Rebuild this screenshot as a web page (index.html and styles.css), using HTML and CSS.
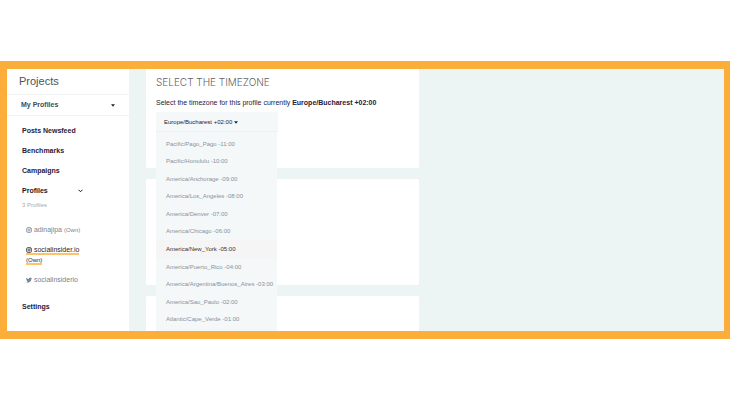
FILE: index.html
```
<!DOCTYPE html>
<html lang="en">
<head>
  <meta charset="UTF-8">
  <meta name="viewport" content="width=device-width, initial-scale=1">
  <title>Projects - Select the timezone</title>
  <link rel="stylesheet" href="styles.css">
</head>
<body>
  <!-- shared icons -->
  <svg class="sprite" aria-hidden="true">
    <symbol id="instagram" viewBox="0 0 16 16">
      <rect x="1.5" y="1.5" width="13" height="13" rx="4" fill="none" stroke="currentColor" stroke-width="2"/>
      <circle cx="8" cy="8" r="3" fill="none" stroke="currentColor" stroke-width="2"/>
      <circle cx="11.8" cy="4.2" r="1" fill="currentColor"/>
    </symbol>
    <symbol id="twitter" viewBox="0 0 24 24">
      <path fill="currentColor" d="M24 4.6a10 10 0 0 1-2.8.8 5 5 0 0 0 2.1-2.7 10 10 0 0 1-3.1 1.2 4.9 4.9 0 0 0-8.4 4.5A14 14 0 0 1 1.7 3.2a4.9 4.9 0 0 0 1.5 6.5 5 5 0 0 1-2.2-.6 4.9 4.9 0 0 0 3.9 4.9 5 5 0 0 1-2.2.1 4.9 4.9 0 0 0 4.6 3.4A10 10 0 0 1 0 19.5 14 14 0 0 0 21.5 7.1 10 10 0 0 0 24 4.6z"/>
    </symbol>
    <symbol id="caret" viewBox="0 0 8 5">
      <path fill="currentColor" d="M0 0h8L4 5z"/>
    </symbol>
    <symbol id="chevron" viewBox="0 0 10 7">
      <path fill="none" stroke="currentColor" stroke-width="2" d="M1 1l4 4 4-4"/>
    </symbol>
  </svg>

  <div class="frame">
    <aside class="sidebar">
      <h1 class="sidebar-title">Projects</h1>
      <div class="project-picker">
        <select class="project-select" aria-label="Project">
          <option>My Profiles</option>
        </select>
        <svg class="caret"><use href="#caret"/></svg>
      </div>
      <nav class="nav">
        <a class="nav-link" href="#">Posts Newsfeed</a>
        <a class="nav-link" href="#">Benchmarks</a>
        <a class="nav-link" href="#">Campaigns</a>
        <a class="nav-link nav-link-open" href="#">Profiles <svg class="chevron"><use href="#chevron"/></svg></a>
        <p class="nav-count">3 Profiles</p>
        <ul class="profiles">
          <li><a class="profile" href="#"><svg class="icon"><use href="#instagram"/></svg> adinajipa <small>(Own)</small></a></li>
          <li><a class="profile profile-active" href="#"><svg class="icon"><use href="#instagram"/></svg> socialinsider.io <small>(Own)</small></a></li>
          <li><a class="profile" href="#"><svg class="icon"><use href="#twitter"/></svg> socialinsiderio</a></li>
        </ul>
        <a class="nav-link" href="#">Settings</a>
      </nav>
    </aside>

    <main class="content">
      <section class="card">
        <h2 class="card-title">SELECT THE TIMEZONE</h2>
        <p class="card-text">Select the timezone for this profile currently <b>Europe/Bucharest +02:00</b></p>
        <div class="dropdown">
          <button class="dropdown-toggle" type="button" aria-haspopup="listbox" aria-expanded="true">Europe/Bucharest +02:00 <svg class="caret"><use href="#caret"/></svg></button>
          <div class="dropdown-menu" role="listbox" aria-label="Timezone">
            <button class="dropdown-item" type="button" role="option">Pacific/Pago_Pago -11:00</button>
            <button class="dropdown-item" type="button" role="option">Pacific/Honolulu -10:00</button>
            <button class="dropdown-item" type="button" role="option">America/Anchorage -09:00</button>
            <button class="dropdown-item" type="button" role="option">America/Los_Angeles -08:00</button>
            <button class="dropdown-item" type="button" role="option">America/Denver -07:00</button>
            <button class="dropdown-item" type="button" role="option">America/Chicago -06:00</button>
            <button class="dropdown-item dropdown-item-hover" type="button" role="option">America/New_York -05:00</button>
            <button class="dropdown-item" type="button" role="option">America/Puerto_Rico -04:00</button>
            <button class="dropdown-item" type="button" role="option">America/Argentina/Buenos_Aires -03:00</button>
            <button class="dropdown-item" type="button" role="option">America/Sao_Paulo -02:00</button>
            <button class="dropdown-item" type="button" role="option">Atlantic/Cape_Verde -01:00</button>
          </div>
        </div>
      </section>
      <section class="card"></section>
      <section class="card"></section>
    </main>
  </div>
</body>
</html>
```

FILE: styles.css
```
* {
  box-sizing: border-box;
}
body {
  margin: 0;
  min-height: 100vh;
  display: flex;
  align-items: center;
  background: #fff;
  color: #25213b;
  font-family: "Liberation Sans", Arial, sans-serif;
  font-size: 7px;
  line-height: 10px;
}
h1, h2, p, ul {
  margin: 0;
  padding: 0;
}
a {
  color: inherit;
  text-decoration: none;
}
button, select {
  border: 0;
  background: none;
  color: inherit;
  font: inherit;
  text-align: left;
}
.sprite {
  display: none;
}
.caret {
  width: 4px;
  height: 3px;
}
.frame {
  width: 100%;
  display: flex;
  border: solid #fcae3b;
  border-width: 8px 6px 8px 7px;
  background: #edf4f4;
  overflow: hidden;
}

/* sidebar */
.sidebar {
  flex: 0 0 122px;
  background: #fff;
}
.sidebar-title {
  padding: 5px 12px 6px;
  color: #4c5258;
  font-size: 11px;
  font-weight: normal;
  line-height: 14px;
}
.project-picker {
  display: flex;
  align-items: center;
  padding: 0 14px;
  border: solid #f1f3f4;
  border-width: 1px 0;
}
.project-select {
  flex: 1;
  height: 20px;
  padding: 0;
  appearance: none;
  color: #454b50;
  font-weight: bold;
}
.nav {
  display: flex;
  flex-direction: column;
  gap: 10px;
  padding: 10px 15px 19px;
}
.nav-link {
  font-weight: bold;
}
.nav-link-open {
  display: flex;
  align-items: center;
  justify-content: space-between;
  width: 61px;
  color: #17171f;
}
.chevron {
  width: 5px;
  height: 4px;
}
.nav-count {
  margin-top: -6px;
  color: #a3a8ad;
  font-size: 6px;
}
.profiles {
  display: flex;
  flex-direction: column;
  gap: 10px;
  padding: 5px 4px 7px;
  list-style: none;
}
.profiles li {
  width: 56px;
}
.profile {
  color: #77838f;
}
.profile small {
  font-size: 6px;
}
.profile-active {
  border-bottom: 2px solid #fdc36b;
  color: #25252b;
}
.icon {
  width: 6px;
  height: 6px;
  vertical-align: -1px;
}

/* content */
.content {
  flex: 1;
  padding-left: 17px;
  display: grid;
  grid-template-columns: minmax(0, 273px);
  grid-template-rows: 99px 106px 1fr;
  row-gap: 11px;
}
.card {
  padding: 7px 10px;
  border-radius: 2px;
  background: #fff;
}
.card:first-child {
  border-radius: 0 0 2px 2px;
}
.card:last-child {
  border-radius: 2px 2px 0 0;
}
.card-title {
  color: #5f6368;
  font-family: Inter, sans-serif;
  font-size: 10px;
  font-weight: 300;
  line-height: 12px;
}
.card-text {
  margin-top: 10px;
}
.dropdown {
  position: relative;
  width: 122px;
  margin-top: 4px;
}
.dropdown-toggle {
  display: block;
  width: 100%;
  height: 20px;
  padding: 0 8px;
  border-bottom: 1px solid #ecf1f2;
  border-radius: 2px 2px 0 0;
  background: #f4f8f9;
  font-size: 6px;
}
.dropdown-menu {
  position: absolute;
  top: 100%;
  left: 0;
  z-index: 1;
  width: 121px;
  height: 204px;
  padding: 3px 0 8px;
  display: grid;
  grid-template-columns: minmax(0, 1fr);
  grid-auto-rows: 1fr;
  background: #f4f8f9;
}
.dropdown-item {
  padding: 0 10px;
  color: #86939d;
  font-size: 6px;
  white-space: nowrap;
}
.dropdown-item-hover {
  background: #f5f5f6;
  color: #333;
}
```
